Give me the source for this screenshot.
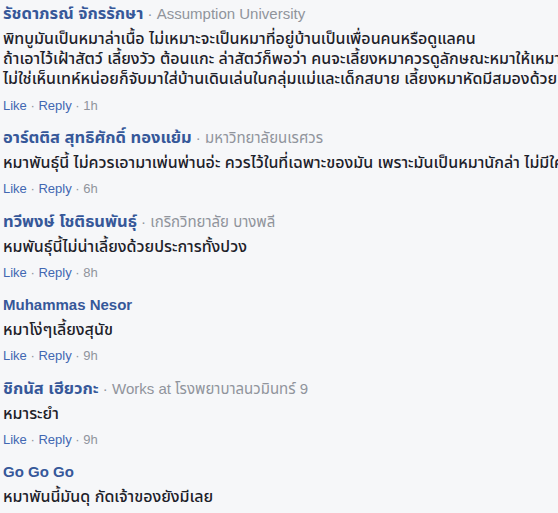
import React from "react";

type Comment = {
  name: string;
  thaiName?: boolean;
  meta?: React.ReactNode;
  lines: string[];
  time?: string;
};

const COMMENTS: Comment[] = [
  {
    name: "รัชดาภรณ์ จักรรักษา",
    thaiName: true,
    meta: "Assumption University",
    lines: [
      "พิทบูมันเป็นหมาล่าเนื้อ ไม่เหมาะจะเป็นหมาที่อยู่บ้านเป็นเพื่อนคนหรือดูแลคน",
      "ถ้าเอาไว้เฝ้าสัตว์ เลี้ยงวัว ต้อนแกะ ล่าสัตว์ก็พอว่า คนจะเลี้ยงหมาควรดูลักษณะหมาให้เหมาะสม",
      "ไม่ใช่เห็นเทห์หน่อยก็จับมาใส่บ้านเดินเล่นในกลุ่มแม่และเด็กสบาย เลี้ยงหมาหัดมีสมองด้วย",
    ],
    time: "1h",
  },
  {
    name: "อาร์ตติส สุทธิศักดิ์ ทองแย้ม",
    thaiName: true,
    meta: "มหาวิทยาลัยนเรศวร",
    lines: [
      "หมาพันธุ์นี้ ไม่ควรเอามาเพ่นพ่านอ่ะ ควรไว้ในที่เฉพาะของมัน เพราะมันเป็นหมานักล่า ไม่มีใครรู้",
    ],
    time: "6h",
  },
  {
    name: "ทวีพงษ์ โชติธนพันธุ์",
    thaiName: true,
    meta: "เกริกวิทยาลัย บางพลี",
    lines: ["หมพันธุ์นี้ไม่น่าเลี้ยงด้วยประการทั้งปวง"],
    time: "8h",
  },
  {
    name: "Muhammas Nesor",
    lines: ["หมาโง่ๆเลี้ยงสุนัข"],
    time: "9h",
  },
  {
    name: "ชิกนัส เฮียวกะ",
    thaiName: true,
    meta: "Works at โรงพยาบาลนวมินทร์ 9",
    lines: ["หมาระยำ"],
    time: "9h",
  },
  {
    name: "Go Go Go",
    lines: ["หมาพันนี้มันดุ กัดเจ้าของยังมีเลย"],
  },
];

function CommentRow({c}: {c: Comment}) {
  return (
    <div className="group pb-[13px] first:pb-[12px]">
      <div className="whitespace-nowrap text-[15px] leading-[20px]">
        <span className={c.thaiName ? "text-[16.5px] font-bold text-[#365899]" : "font-bold text-[#365899]"}>
          {c.name}
        </span>
        {c.meta && <span className="text-[#90949c]"> · {c.meta}</span>}
      </div>
      <div className="mt-[5px] text-[16px] leading-[20px] font-medium text-[#1d2129]">
        {c.lines.map((l, i) => (
          <div key={i} className="whitespace-nowrap">
            {l}
          </div>
        ))}
      </div>
      {c.time && (
        <div className="mt-[7px] whitespace-nowrap text-[13px] leading-[18px] text-[#90949c] group-first:mt-[8px]">
          <span className="text-[#4267b2]">Like</span> · <span className="text-[#4267b2]">Reply</span> ·{" "}
          {c.time}
        </div>
      )}
    </div>
  );
}

export default function App() {
  return (
    <div
      className="h-[513px] w-[558px] overflow-hidden bg-[#f6f7f9] px-[3px] pt-[3px]"
      style={{fontFamily: '"Liberation Sans", Tahoma, "Noto Sans Thai", sans-serif'}}
    >
      {COMMENTS.map((c, i) => (
        <CommentRow key={i} c={c} />
      ))}
    </div>
  );
}
